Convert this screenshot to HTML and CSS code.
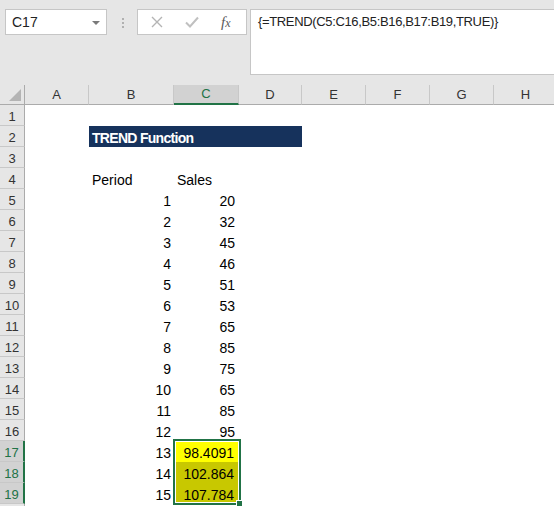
FILE: index.html
```html
<!DOCTYPE html>
<html>
<head>
<meta charset="utf-8">
<link rel="stylesheet" href="styles.css">
</head>
<body>
<div class="app">
  <div class="toolbar">
    <div class="namebox"><span class="nb-text">C17</span><span class="caret"></span></div>
    <div class="grip"><i></i><i></i><i></i></div>
    <div class="fbuttons">
      <svg class="ico" width="12" height="12" viewBox="0 0 12 12"><path d="M1 1 L11 11 M11 1 L1 11" stroke="#b4b4b4" stroke-width="1.4" fill="none"/></svg>
      <svg class="ico" width="14" height="12" viewBox="0 0 14 12"><path d="M1 6.5 L5 10.5 L13 1.5" stroke="#c0c0c0" stroke-width="2" fill="none"/></svg>
      <span class="fx">f<span class="fx-x">x</span></span>
    </div>
    <div class="formula">{=TREND(C5:C16,B5:B16,B17:B19,TRUE)}</div>
  </div>
  <div class="sheet">
    <div class="ch corner"><span class="tri"></span></div>
    <div class="ch">A</div><div class="ch">B</div><div class="ch sel">C</div><div class="ch">D</div><div class="ch">E</div><div class="ch">F</div><div class="ch">G</div><div class="ch">H</div>

    <div class="rh">1</div><div></div><div></div><div></div><div></div><div></div><div></div><div></div><div></div>
    <div class="rh">2</div><div></div><div class="title">TREND Function</div><div></div><div></div><div></div><div></div>
    <div class="rh">3</div><div></div><div></div><div></div><div></div><div></div><div></div><div></div><div></div>
    <div class="rh">4</div><div></div><div class="c">Period</div><div class="c">Sales</div><div></div><div></div><div></div><div></div><div></div>
    <div class="rh">5</div><div></div><div class="c r">1</div><div class="c r cc">20</div><div></div><div></div><div></div><div></div><div></div>
    <div class="rh">6</div><div></div><div class="c r">2</div><div class="c r cc">32</div><div></div><div></div><div></div><div></div><div></div>
    <div class="rh">7</div><div></div><div class="c r">3</div><div class="c r cc">45</div><div></div><div></div><div></div><div></div><div></div>
    <div class="rh">8</div><div></div><div class="c r">4</div><div class="c r cc">46</div><div></div><div></div><div></div><div></div><div></div>
    <div class="rh">9</div><div></div><div class="c r">5</div><div class="c r cc">51</div><div></div><div></div><div></div><div></div><div></div>
    <div class="rh">10</div><div></div><div class="c r">6</div><div class="c r cc">53</div><div></div><div></div><div></div><div></div><div></div>
    <div class="rh">11</div><div></div><div class="c r">7</div><div class="c r cc">65</div><div></div><div></div><div></div><div></div><div></div>
    <div class="rh">12</div><div></div><div class="c r">8</div><div class="c r cc">85</div><div></div><div></div><div></div><div></div><div></div>
    <div class="rh">13</div><div></div><div class="c r">9</div><div class="c r cc">75</div><div></div><div></div><div></div><div></div><div></div>
    <div class="rh">14</div><div></div><div class="c r">10</div><div class="c r cc">65</div><div></div><div></div><div></div><div></div><div></div>
    <div class="rh">15</div><div></div><div class="c r">11</div><div class="c r cc">85</div><div></div><div></div><div></div><div></div><div></div>
    <div class="rh">16</div><div></div><div class="c r">12</div><div class="c r cc">95</div><div></div><div></div><div></div><div></div><div></div>
    <div class="rh sel">17</div><div></div><div class="c r">13</div><div class="c r cc active">98.4091</div><div></div><div></div><div></div><div></div><div></div>
    <div class="rh sel">18</div><div></div><div class="c r">14</div><div class="c r cc shaded">102.864</div><div></div><div></div><div></div><div></div><div></div>
    <div class="rh sel">19</div><div></div><div class="c r">15</div><div class="c r cc shaded">107.784</div><div></div><div></div><div></div><div></div><div></div>
    <div class="rh"></div><div></div><div></div><div></div><div></div><div></div><div></div><div></div><div></div>

    <div class="selection"><span class="handle"></span></div>
  </div>
</div>
</body>
</html>
```
FILE: styles.css
```css
html, body {
  margin: 0;
  padding: 0;
  background: #ffffff;
}
.app {
  width: 554px;
  height: 506px;
  overflow: hidden;
  font-family: "Liberation Sans", Arial, sans-serif;
  color: #000;
}
.toolbar {
  display: flex;
  align-items: flex-start;
  height: 85px;
  box-sizing: border-box;
  padding: 9px 0 0 5px;
  background: #e6e6e6;
  overflow: hidden;
}
.namebox {
  flex-shrink: 0;
  width: 102px;
  height: 26px;
  box-sizing: border-box;
  border: 1px solid #c6c6c6;
  background: #fff;
  display: flex;
  align-items: center;
  justify-content: space-between;
  padding: 0 6px 0 6px;
  font-size: 14px;
  color: #222;
}
.caret {
  width: 0;
  height: 0;
  border-left: 4px solid transparent;
  border-right: 4px solid transparent;
  border-top: 4px solid #7a7a7a;
  margin-top: 1px;
}
.grip {
  flex-shrink: 0;
  margin-left: 15px;
  margin-top: 9px;
  width: 2px;
  display: flex;
  flex-direction: column;
  gap: 2px;
}
.grip i {
  display: block;
  width: 2px;
  height: 2px;
  background: #b0b0b0;
}
.fbuttons {
  flex-shrink: 0;
  margin-left: 13px;
  width: 110px;
  height: 26px;
  box-sizing: border-box;
  border: 1px solid #c6c6c6;
  background: #fff;
  display: flex;
  align-items: center;
  padding-left: 13px;
}
.fbuttons .ico {
  display: block;
}
.fbuttons .ico:nth-child(2) {
  margin-left: 22px;
}
.fx {
  margin-left: 22px;
  font-family: "Liberation Serif", "Times New Roman", serif;
  font-style: italic;
  font-size: 15px;
  color: #5a5a5a;
  line-height: 1;
}
.fx-x {
  font-size: 12px;
}
.formula {
  flex-shrink: 0;
  margin-left: 3px;
  width: 330px;
  height: 66px;
  box-sizing: border-box;
  border: 1px solid #c6c6c6;
  background: #fff;
  padding: 4px 0 0 7px;
  font-size: 13px;
  letter-spacing: -0.35px;
  color: #222;
  white-space: nowrap;
}
.sheet {
  position: relative;
  display: grid;
  grid-template-columns: 25px 64px 85px 65px 63px 64px 64px 64px 64px;
  grid-template-rows: 20px repeat(20, 21px);
  width: 558px;
}
.ch {
  background: #e6e6e6;
  border-right: 1px solid #c8c8c8;
  border-bottom: 1px solid #ababab;
  box-sizing: border-box;
  text-align: center;
  font-size: 13px;
  line-height: 19px;
  color: #333;
}
.ch.corner {
  position: relative;
  border-right: 1px solid #ababab;
}
.tri {
  position: absolute;
  right: 3px;
  bottom: 3px;
  width: 0;
  height: 0;
  border-left: 12px solid transparent;
  border-bottom: 12px solid #b4b4b4;
}
.ch.sel {
  background: #d2d2d2;
  color: #217346;
  border-bottom: 2px solid #217346;
  line-height: 18px;
}
.rh {
  background: #e6e6e6;
  border-right: 1px solid #ababab;
  border-bottom: 1px solid #c8c8c8;
  box-sizing: border-box;
  text-align: center;
  font-size: 13px;
  line-height: 16px;
  padding-top: 4px;
  color: #333;
}
.rh.sel {
  background: #d2d2d2;
  color: #217346;
  border-right: 2px solid #217346;
}
.c {
  display: flex;
  align-items: flex-end;
  padding: 0 3px 1px 3px;
  font-size: 14px;
  line-height: 16px;
  box-sizing: border-box;
  white-space: nowrap;
}
.c.r {
  justify-content: flex-end;
}
.c.cc {
  padding-right: 4px;
}
.c.active {
  background: #ffff00;
  padding-right: 5px;
}
.c.shaded {
  background: #c8c800;
  padding-right: 5px;
}
.title {
  grid-column: span 3;
  background: #16325c;
  color: #fff;
  font-weight: bold;
  font-size: 14px;
  letter-spacing: -0.7px;
  line-height: 16px;
  padding: 3px 3px 0 3px;
  display: flex;
  align-items: center;
  white-space: nowrap;
}
.selection {
  position: absolute;
  left: 173px;
  top: 354px;
  width: 68px;
  height: 66px;
  box-sizing: border-box;
  border: 2px solid #217346;
  box-shadow: inset 0 0 0 1px #ffffff;
}
.handle {
  position: absolute;
  right: -4px;
  bottom: -4px;
  width: 5px;
  height: 5px;
  background: #217346;
  border: 1px solid #ffffff;
}
```
